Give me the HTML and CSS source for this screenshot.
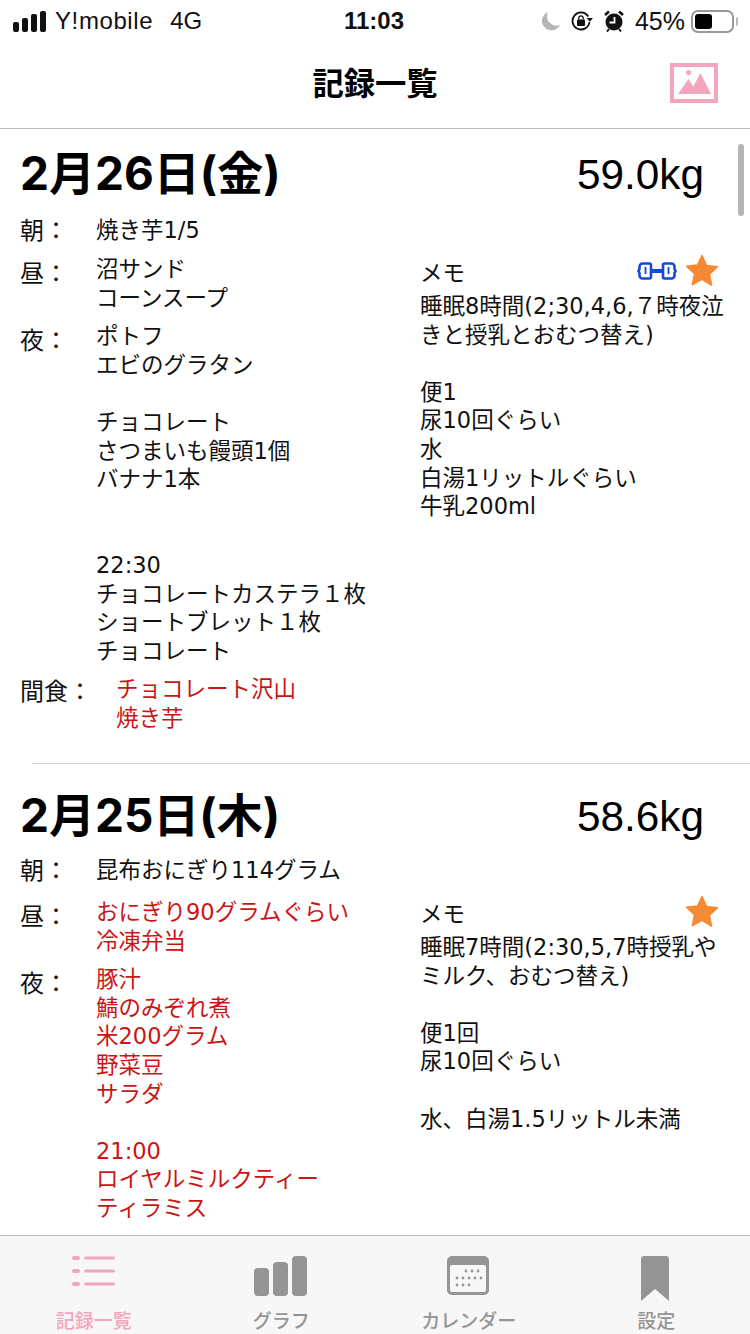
FILE: index.html
```html
<!DOCTYPE html>
<html lang="ja">
<head>
  <meta charset="UTF-8">
  <meta name="viewport" content="width=device-width, initial-scale=1">
  <title>記録一覧</title>
  <link rel="stylesheet" href="styles.css">
</head>
<body>
  <div class="app">
    <div class="statusbar">
      <div class="status-left">
        <svg class="signal" width="33" height="21" viewBox="0 0 33 21"><rect x="0" y="11" width="6" height="10" rx="2"/><rect x="9" y="7" width="6" height="14" rx="2"/><rect x="18" y="3" width="6" height="18" rx="2"/><rect x="27" y="0" width="6" height="21" rx="2"/></svg>
        <span class="carrier">Y!mobile</span>
        <span class="network">4G</span>
      </div>
      <div class="status-time">11:03</div>
      <div class="status-right">
        <svg class="moon" width="18" height="20" viewBox="0 0 18 20"><path d="M6 1a9.500 9.500 0 1 0 12 13A9.500 9.500 0 0 1 6 1z" fill="#b5b5b5"/></svg>
        <svg class="lock" width="22" height="20" viewBox="0 0 22 20"><path d="M17.300 5.500A8.500 8.500 0 1 0 18.500 11" fill="none" stroke="#111" stroke-width="1.800"/><path d="M15.500 7h6.500l-3.200 3.800z" fill="#111"/><rect x="6" y="8.500" width="8" height="6.500" rx="1" fill="#111"/><path d="M7.800 8.500V7a2.200 2.200 0 0 1 4.400 0v1.500" fill="none" stroke="#111" stroke-width="1.300"/></svg>
        <svg class="alarm" width="20" height="22" viewBox="0 0 20 22"><circle cx="10" cy="12" r="8.500" fill="#111"/><path d="M10.500 7v5.500H5.500" fill="none" stroke="#fff" stroke-width="1.800"/><path d="M1 5L5 1.500M19 5L15 1.500" stroke="#111" stroke-width="2.500"/><path d="M5 19l-2 2.500M15 19l2 2.500" stroke="#111" stroke-width="2"/></svg>
        <span class="battery-text">45%</span>
        <div class="battery"><div class="battery-level"></div></div>
        <div class="battery-tip"></div>
      </div>
    </div>

    <header class="navbar">
      <h1>記録一覧</h1>
      <svg class="photo-icon" width="48" height="40" viewBox="0 0 48 40">
        <rect x="2" y="2" width="44" height="36" fill="#fff" stroke="#f3a5bc" stroke-width="4"/>
        <circle cx="18.500" cy="9.500" r="2.500" fill="#f3a5bc"/>
        <path d="M8 31l10.500-15L28 31zM23 24l7.500-14L41 31H27.500z" fill="#f3a5bc"/>
      </svg>
    </header>

    <main class="list">
      <div class="scrollbar"></div>

      <section class="entry entry-first">
        <div class="entry-head">
          <div class="date">2月26日(金)</div>
          <div class="weight">59.0kg</div>
        </div>
        <div class="entry-body">
          <div class="meals">
            <div class="meal meal-morning"><div class="label">朝：</div><div class="text">焼き芋1/5</div></div>
            <div class="meal"><div class="label">昼：</div><div class="text">沼サンド
コーンスープ</div></div>
            <div class="meal"><div class="label">夜：</div><div class="text">ポトフ
エビのグラタン

チョコレート
さつまいも饅頭1個
バナナ1本


22:30
チョコレートカステラ１枚
ショートブレット１枚
チョコレート</div></div>
            <div class="meal meal-snack"><div class="label">間食：</div><div class="text red">チョコレート沢山
焼き芋</div></div>
          </div>
          <div class="memo">
            <div class="memo-head">
              <span>メモ</span>
              <div class="memo-icons">
                <svg width="40" height="20" viewBox="0 0 40 20"><g fill="#fff" stroke="#1548d8" stroke-width="2.600"><path d="M5.500 2.500h7a1.500 1.500 0 0 1 1.500 1.500v12a1.500 1.500 0 0 1-1.500 1.500h-7a3 3 0 0 1-3-3V12L1.500 10l1-2V5.500a3 3 0 0 1 3-3z"/><path d="M34.500 2.500h-7a1.500 1.500 0 0 0-1.500 1.500v12a1.500 1.500 0 0 0 1.500 1.500h7a3 3 0 0 0 3-3V12l1-2-1-2V5.500a3 3 0 0 0-3-3z"/></g><path d="M14 10h12" stroke="#1548d8" stroke-width="4"/><path d="M8.500 6v7M31.500 6v7" stroke="#1548d8" stroke-width="1.800"/></svg>
                <svg class="star" width="34" height="32" viewBox="0 0 34 32"><path d="M17 1.500l4.600 10 10.900 1.300-8 7.500 2.100 10.800L17 25.300 7.400 30.600l2.100-10.800-8-7.500 10.900-1.300z" fill="#f58a33" stroke="#f58a33" stroke-width="1.500" stroke-linejoin="round"/></svg>
              </div>
            </div>
            <div class="memo-text">睡眠8時間(2;30,4,6,７時夜泣きと授乳とおむつ替え)

便1
尿10回ぐらい
水
白湯1リットルぐらい
牛乳200ml</div>
          </div>
        </div>
      </section>

      <section class="entry entry-second">
        <div class="entry-head">
          <div class="date">2月25日(木)</div>
          <div class="weight">58.6kg</div>
        </div>
        <div class="entry-body">
          <div class="meals">
            <div class="meal meal-morning"><div class="label">朝：</div><div class="text">昆布おにぎり114グラム</div></div>
            <div class="meal"><div class="label">昼：</div><div class="text red">おにぎり90グラムぐらい
冷凍弁当</div></div>
            <div class="meal"><div class="label">夜：</div><div class="text red">豚汁
鯖のみぞれ煮
米200グラム
野菜豆
サラダ

21:00
ロイヤルミルクティー
ティラミス</div></div>
          </div>
          <div class="memo">
            <div class="memo-head">
              <span>メモ</span>
              <div class="memo-icons">
                <svg class="star" width="34" height="32" viewBox="0 0 34 32"><path d="M17 1.500l4.600 10 10.900 1.300-8 7.500 2.100 10.800L17 25.300 7.400 30.600l2.100-10.800-8-7.500 10.900-1.300z" fill="#f58a33" stroke="#f58a33" stroke-width="1.500" stroke-linejoin="round"/></svg>
              </div>
            </div>
            <div class="memo-text">睡眠7時間(2:30,5,7時授乳やミルク、おむつ替え)

便1回
尿10回ぐらい

水、白湯1.5リットル未満</div>
          </div>
        </div>
      </section>
    </main>

    <nav class="tabbar">
      <div class="tab tab-active">
        <div class="tab-icon">
          <svg width="44" height="31" viewBox="0 0 44 31"><g fill="#f3a5bc"><rect x="0" y="0" width="8" height="4" rx="2"/><rect x="0" y="13" width="8" height="4" rx="2"/><rect x="0" y="26" width="8" height="4" rx="2"/><rect x="12" y="0.500" width="31" height="3" rx="1.500"/><rect x="12" y="13.500" width="31" height="3" rx="1.500"/><rect x="12" y="26.500" width="31" height="3" rx="1.500"/></g></svg>
        </div>
        <span>記録一覧</span>
      </div>
      <div class="tab">
        <div class="tab-icon">
          <svg width="53" height="40" viewBox="0 0 53 40"><g fill="#959595"><rect x="0" y="12" width="15" height="28" rx="4"/><rect x="19" y="6" width="15" height="34" rx="4"/><rect x="38" y="0" width="15" height="40" rx="4"/></g></svg>
        </div>
        <span>グラフ</span>
      </div>
      <div class="tab">
        <div class="tab-icon">
          <svg width="42" height="39" viewBox="0 0 42 39"><rect x="0" y="0" width="42" height="39" rx="5" fill="#959595"/><rect x="3" y="9" width="36" height="27" rx="2" fill="#f7f7f7"/><g fill="#959595"><circle cx="19" cy="15" r="1.400"/><circle cx="25" cy="15" r="1.400"/><circle cx="31" cy="15" r="1.400"/><circle cx="10" cy="22" r="1.400"/><circle cx="16" cy="22" r="1.400"/><circle cx="22" cy="22" r="1.400"/><circle cx="28" cy="22" r="1.400"/><circle cx="34" cy="22" r="1.400"/><circle cx="10" cy="29" r="1.400"/><circle cx="16" cy="29" r="1.400"/><circle cx="22" cy="29" r="1.400"/></g></svg>
        </div>
        <span>カレンダー</span>
      </div>
      <div class="tab">
        <div class="tab-icon">
          <svg width="28" height="46" viewBox="0 0 28 46"><path d="M3 0h22a3 3 0 0 1 3 3v42L14 33 0 45V3a3 3 0 0 1 3-3z" fill="#959595"/></svg>
        </div>
        <span>設定</span>
      </div>
    </nav>
  </div>
</body>
</html>
```

FILE: styles.css
```css
html, body {
  margin: 0;
  padding: 0;
}

body {
  width: 750px;
  height: 1334px;
  overflow: hidden;
  background: #fff;
  color: #111;
  font-family: "Liberation Sans", "Noto Sans CJK JP", sans-serif;
}

.app {
  position: relative;
  display: flex;
  flex-direction: column;
  width: 750px;
  height: 1334px;
}

/* status bar */
.statusbar {
  position: relative;
  display: flex;
  justify-content: space-between;
  align-items: center;
  height: 42px;
  flex-shrink: 0;
  padding: 0 12px 0 13px;
  font-size: 24px;
}

.status-left {
  display: flex;
  align-items: center;
  gap: 9px;
}

.signal {
  fill: #111;
}

.carrier {
  letter-spacing: 0.6px;
}

.network {
  margin-left: 8px;
}

.status-time {
  position: absolute;
  left: 344px;
  font-weight: bold;
}

.status-right {
  display: flex;
  align-items: center;
  gap: 11px;
}

.battery-text {
  font-size: 25px;
}

.battery {
  width: 43px;
  height: 23px;
  border: 2px solid #999;
  border-radius: 7px;
  padding: 2px;
  box-sizing: border-box;
  margin-left: -5px;
}

.battery-level {
  width: 17px;
  height: 100%;
  background: #000;
  border-radius: 3px;
}

.battery-tip {
  width: 2px;
  height: 9px;
  background: #bbb;
  margin-left: -9px;
  border-radius: 0 2px 2px 0;
}

/* header */
.navbar {
  position: relative;
  display: flex;
  justify-content: center;
  align-items: center;
  height: 86px;
  flex-shrink: 0;
  border-bottom: 1px solid #b8b8b8;
}

.navbar h1 {
  margin: -7px 0 0;
  font-size: 31.300px;
  font-weight: bold;
  color: #000;
}

.photo-icon {
  position: absolute;
  right: 32px;
  top: 21px;
}

/* list */
.list {
  position: relative;
  flex: 1;
  overflow: hidden;
}

.scrollbar {
  position: absolute;
  top: 15px;
  right: 6px;
  width: 6px;
  height: 72px;
  border-radius: 3px;
  background: #b5b5b5;
}

.entry {
  margin-left: 32px;
  border-top: 1px solid #cfcfcf;
}

.entry-first {
  border-top: none;
  height: 634px;
  box-sizing: border-box;
  padding-top: 15px;
}

.entry-second {
  padding-top: 22px;
}

.entry-head {
  display: flex;
  justify-content: space-between;
  align-items: center;
  height: 52px;
  margin-left: -12px;
  padding-right: 46px;
}

.date {
  font-family: Inter, "Noto Sans CJK JP", sans-serif;
  font-size: 46px;
  font-weight: bold;
  color: #000;
}

.weight {
  font-size: 42.300px;
  margin-top: 10px;
  color: #000;
}

.entry-body {
  display: flex;
  margin-left: -12px;
}

.entry-first .entry-body {
  margin-top: 20px;
}

.entry-second .entry-body {
  margin-top: 18px;
}

.meals {
  width: 400px;
  flex-shrink: 0;
}

.meal {
  display: flex;
  margin-bottom: 10px;
}

.entry-first .meal-morning {
  margin-bottom: 8px;
}

.entry-second .meal-morning {
  margin-bottom: 11px;
}

.label {
  width: 76px;
  flex-shrink: 0;
  margin-top: 3px;
  font-size: 24px;
  line-height: 32px;
}

.meal-morning .label {
  margin-top: -1px;
}

.meal-snack .label {
  width: 96px;
  margin-top: 1px;
}

.text {
  font-family: "DejaVu Sans", "Noto Sans CJK JP", sans-serif;
  font-size: 22.500px;
  line-height: 28.600px;
  white-space: pre-line;
}

.red {
  color: #cc1414;
}

.memo {
  width: 304px;
  font-family: "DejaVu Sans", "Noto Sans CJK JP", sans-serif;
  font-size: 22.500px;
}

.entry-first .memo {
  margin-top: 39px;
}

.entry-second .memo {
  margin-top: 40px;
}

.memo-head {
  display: flex;
  justify-content: space-between;
  align-items: center;
  height: 32px;
}

.memo-icons {
  display: flex;
  align-items: center;
  gap: 8px;
  margin-right: 5px;
}

.star {
  margin-top: -3px;
}

.memo-text {
  line-height: 28.600px;
  white-space: pre-line;
  margin-top: 5px;
}

/* tab bar */
.tabbar {
  position: absolute;
  left: 0;
  right: 0;
  bottom: 0;
  display: flex;
  height: 99px;
  box-sizing: border-box;
  background: #f7f7f7;
  border-top: 1px solid #b8b8b8;
}

.tab {
  display: flex;
  flex: 1;
  flex-direction: column;
  align-items: center;
  padding-top: 20px;
  font-size: 19px;
  font-weight: 500;
  color: #959595;
}

.tab-icon {
  display: flex;
  align-items: flex-start;
  justify-content: center;
  height: 46px;
  margin-bottom: 4px;
  margin-right: 2px;
}

.tab-active .tab-icon {
  margin-right: 0;
}

.tab-active {
  color: #f3a5bc;
}
```
